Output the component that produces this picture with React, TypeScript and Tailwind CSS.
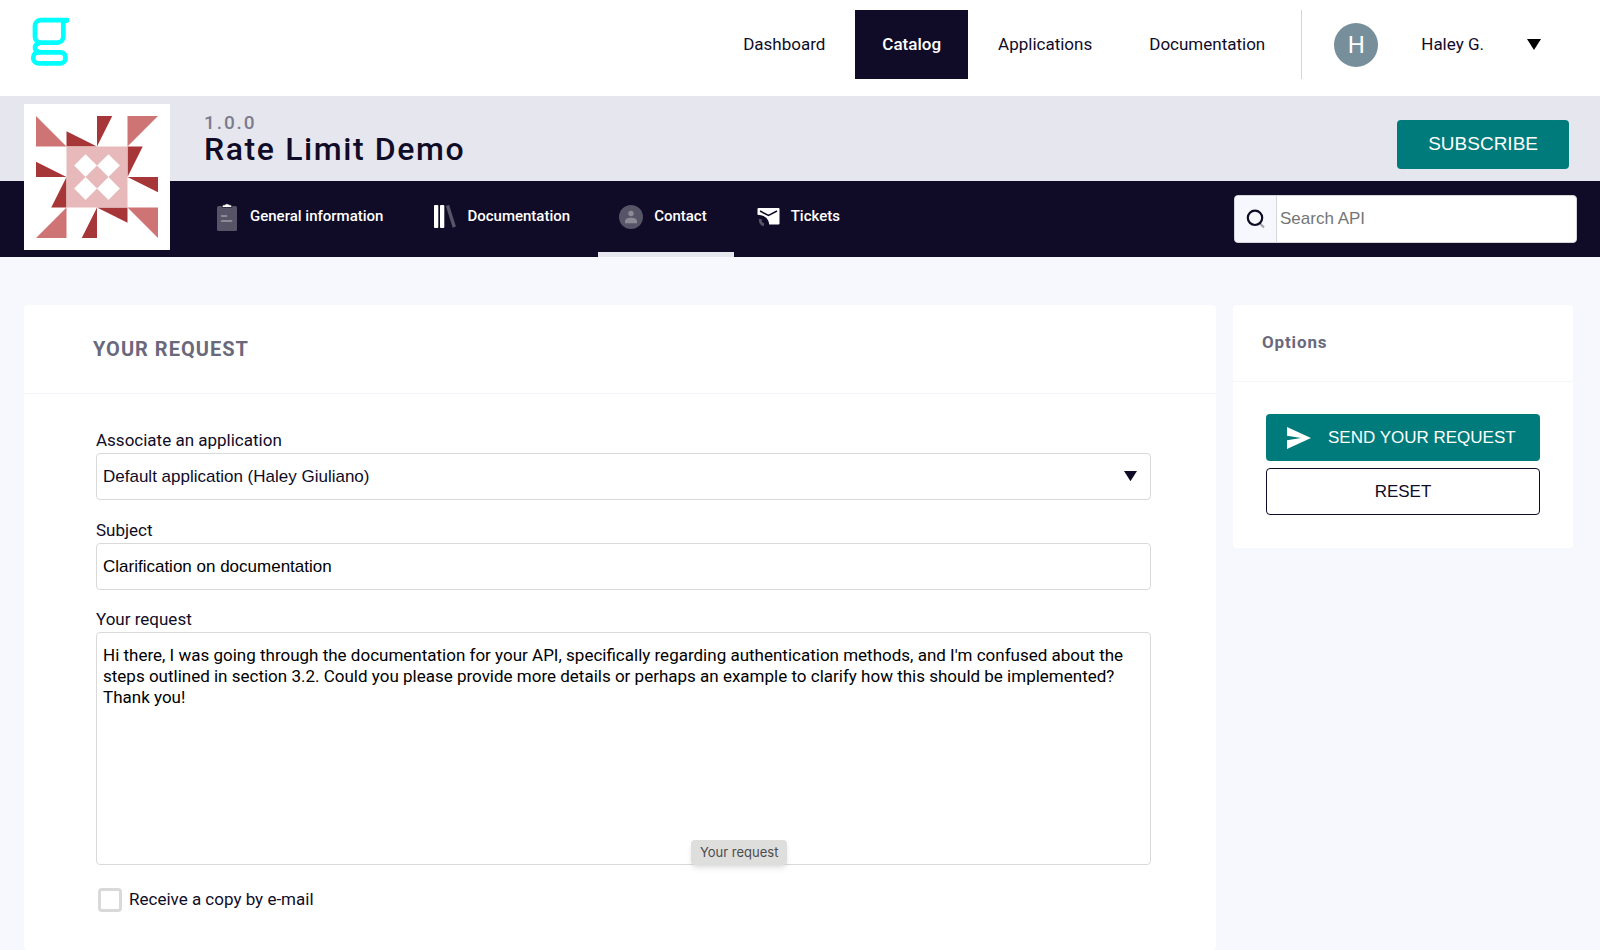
import { useState } from 'react';
import type { ReactNode } from 'react';

const navLinks = ['Dashboard', 'Catalog', 'Applications', 'Documentation'];

const message =
  "Hi there, I was going through the documentation for your API, specifically regarding authentication methods, and I'm confused about the steps outlined in section 3.2. Could you please provide more details or perhaps an example to clarify how this should be implemented? Thank you!";

function Logo() {
  return (
    <svg width="40" height="50" viewBox="0 0 40 50" fill="none" stroke="#00ffff" strokeWidth="4.7">
      <path d="M38 3.2H10.8a5.8 5.8 0 0 0-5.8 5.8v10.8a5.8 5.8 0 0 0 5.8 5.8H27.5a5.8 5.8 0 0 0 5.8-5.8V3.2" />
      <path d="M34 .9H39V4.5L37.5 6H34z" fill="#00ffff" stroke="none" />
      <path d="M9.5 26C3.6 27.5 3.6 33.3 9 35" />
      <path d="M8.3 35.3H30.5a5 5 0 0 1 5 5v1a5 5 0 0 1-5 5H8.3a5 5 0 0 1-5-5v-1a5 5 0 0 1 5-5z" />
    </svg>
  );
}

function ApiPicture() {
  return (
    <svg viewBox="0 0 80 80" className="w-full">
      <path fill="#cf7475" d="M0 0V20H20zM60 0H80L60 20zM60 60H80V80zM20 60V80H0z" />
      <path
        fill="#a73639"
        d="M20 10V20H40zM40 0H50L40 20zM60 20H70L60 40zM60 40H80V50zM60 60H40L60 70zM40 60V80H30zM0 30V40H20zM20 40V60H10z"
      />
      <path fill="#e7b9ba" d="M20 20H60V60H20z" />
      <path
        fill="#fff"
        d="M32.5 25L40 32.5L32.5 40L25 32.5zM47.5 25L55 32.5L47.5 40L40 32.5zM32.5 40L40 47.5L32.5 55L25 47.5zM47.5 40L55 47.5L47.5 55L40 47.5z"
      />
    </svg>
  );
}

function InfoIcon() {
  return (
    <svg width="24" height="28" viewBox="0 0 24 28">
      <rect x="2" y="3" width="20" height="25" rx="1.5" fill="#585467" />
      <path
        d="M7.2 4.5V3Q7.2 1.8 9 1.8H9.8Q10.2.7 12 .7T14.2 1.8H15Q16.8 1.8 16.8 3V4.5z"
        fill="#fff"
        stroke="#100c27"
        strokeWidth=".8"
      />
      <path d="M6.7 13H11.5M6.7 18H16.5" stroke="#8d8a98" strokeWidth="1.8" strokeLinecap="round" />
    </svg>
  );
}

function BooksIcon() {
  return (
    <svg width="24" height="24" viewBox="0 0 24 24">
      <rect x="2" y="0" width="4.3" height="23" rx="1" fill="#fff" />
      <rect x="8" y="0" width="4.3" height="23" rx="1" fill="#fff" />
      <path d="M16 2L21.8 20.5" stroke="#585467" strokeWidth="3.4" strokeLinecap="square" />
    </svg>
  );
}

function ContactIcon() {
  return (
    <svg width="24" height="24" viewBox="0 0 24 24">
      <circle cx="12" cy="12" r="12" fill="#585467" />
      <circle cx="12" cy="8.5" r="2.7" fill="#8d8a98" />
      <path d="M6 18.2V16.5C6 13.8 9 12.8 12 12.8S18 13.8 18 16.5V18.2z" fill="#8d8a98" />
    </svg>
  );
}

function TicketsIcon() {
  return (
    <svg width="24" height="24" viewBox="0 0 24 24">
      <path
        d="M2.5 3H22.5a1 1 0 0 1 1 1V18.5a1 1 0 0 1-1 1H13.2C13 14 9 10 1.5 9.8V4a1 1 0 0 1 1-1z"
        fill="#fff"
      />
      <path d="M4 6L12.5 10.5L21 6" fill="none" stroke="#100c27" strokeWidth="1.5" />
      <path d="M4.2 14C4.2 17.5 5.2 19.3 8 19.8" fill="none" stroke="#585467" strokeWidth="2.8" />
    </svg>
  );
}

function SearchIcon() {
  return (
    <svg width="20" height="20" viewBox="0 0 20 20" fill="none">
      <path d="M13.5 14L18 18.5" stroke="#a5a3b2" strokeWidth="2.2" />
      <circle cx="9" cy="8.8" r="7.2" stroke="#100c27" strokeWidth="2.2" />
    </svg>
  );
}

function SendIcon() {
  return (
    <svg width="24" height="22" viewBox="0 0 24 22" fill="#fff">
      <path d="M0 0L24 11L0 22V13.3L14 11L0 8.7z" />
    </svg>
  );
}

function Caret({ className = '' }: { className?: string }) {
  return (
    <svg viewBox="0 0 14 11" className={className} fill="currentColor">
      <path d="M0 0H14L7 11z" />
    </svg>
  );
}

const tabs: { label: string; icon: ReactNode }[] = [
  { label: 'General information', icon: <InfoIcon /> },
  { label: 'Documentation', icon: <BooksIcon /> },
  { label: 'Contact', icon: <ContactIcon /> },
  { label: 'Tickets', icon: <TicketsIcon /> },
];

function Header() {
  return (
    <header className="flex h-24 items-start justify-between bg-white pl-[30px] pr-[59px]">
      <a href="#" aria-label="Home" className="pt-[17px]">
        <Logo />
      </a>
      <div className="flex items-center pt-2.5">
        <nav className="flex gap-[3px]">
          {navLinks.map((link) => (
            <a
              key={link}
              href="#"
              className={`flex h-[69px] items-center px-[27px] text-[17px] ${
                link === 'Catalog' ? 'bg-[#100c27] font-medium text-white' : ''
              }`}
            >
              {link}
            </a>
          ))}
        </nav>
        <div className="ml-[9px] h-[69px] border-l border-[#d3d3d8]" />
        <button className="ml-8 flex items-center">
          <span className="flex size-11 items-center justify-center rounded-full bg-[#778f9b] text-[24px] text-white">H</span>
          <span className="ml-[43px] text-[17px]">Haley G.</span>
          <Caret className="ml-[43px] w-3.5 text-black" />
        </button>
      </div>
    </header>
  );
}

function ApiHeader() {
  return (
    <div className="relative">
      <div className="flex h-[85px] items-center justify-between bg-[#e6e6ef] pl-[204px] pr-[31px]">
        <div>
          <div className="text-[19px] leading-5 font-medium tracking-widest text-[#7d7c8d]">1.0.0</div>
          <h1 className="text-[32px] leading-8 font-medium tracking-wider">Rate Limit Demo</h1>
        </div>
        <button className="mt-3 h-[49px] rounded-sm bg-[#007b7b] px-[31px] font-['Liberation_Sans',sans-serif] text-[19px] text-white">
          SUBSCRIBE
        </button>
      </div>
      <div className="flex h-[76px] items-center justify-between bg-[#100c27] pl-[194px] pr-[23px]">
        <nav className="flex h-full gap-px">
          {tabs.map((tab) => (
            <a
              key={tab.label}
              href="#"
              className={`flex items-center gap-[11px] border-b-[5px] pl-[21px] pr-[27px] text-[15px] font-medium text-white ${
                tab.label === 'Contact' ? 'border-[#e6e6ef]' : 'border-transparent'
              }`}
            >
              {tab.icon}
              {tab.label}
            </a>
          ))}
        </nav>
        <label className="flex h-12 w-[343px] overflow-hidden rounded border border-[#d5d5da] bg-white">
          <span className="flex w-[42px] items-center justify-center border-r border-[#d5d5da] bg-[#f7f8fd]">
            <SearchIcon />
          </span>
          <input
            type="search"
            aria-label="Search API"
            placeholder="Search API"
            className="min-w-0 flex-1 px-[3px] font-['Liberation_Sans',sans-serif] text-[17px] outline-none placeholder:text-[#757575]"
          />
        </label>
      </div>
      <div className="absolute left-6 top-2 size-[146px] bg-white p-3">
        <ApiPicture />
      </div>
    </div>
  );
}

function RequestForm() {
  const [subject, setSubject] = useState('Clarification on documentation');
  const [request, setRequest] = useState(message);
  const [copy, setCopy] = useState(false);

  return (
    <section className="flex-1 rounded bg-white">
      <h2 className="flex h-[89px] items-center border-b border-[#f4f5fb] pl-[69px] text-[20px] font-bold tracking-wider text-[#6a697c]">
        YOUR REQUEST
      </h2>
      <form className="pl-[72px] pr-[65px] pt-9 text-[17px]">
        <label htmlFor="application" className="block pb-0.5 leading-[21px]">
          Associate an application
        </label>
        <div className="relative mb-5">
          <select
            id="application"
            className="h-[47px] w-full appearance-none rounded border border-[#d9d9d9] bg-white px-1.5 font-['Liberation_Sans',sans-serif]"
          >
            <option>Default application (Haley Giuliano)</option>
          </select>
          <Caret className="pointer-events-none absolute right-3.5 top-[18px] w-[13px]" />
        </div>

        <label htmlFor="subject" className="block pb-0.5 leading-[21px]">
          Subject
        </label>
        <input
          id="subject"
          type="text"
          value={subject}
          onChange={(e) => setSubject(e.target.value)}
          className="mb-[19px] block h-[47px] w-full rounded border border-[#d9d9d9] px-1.5 font-['Liberation_Sans',sans-serif] text-black"
        />

        <label htmlFor="request" className="block pb-0.5 leading-[21px]">
          Your request
        </label>
        <div className="relative">
          <textarea
            id="request"
            value={request}
            onChange={(e) => setRequest(e.target.value)}
            className="block h-[233px] w-full resize-none rounded border border-[#d9d9d9] px-1.5 py-3 leading-[21px] text-black"
          />
          <div
            role="tooltip"
            className="absolute bottom-0 left-[595px] rounded-sm bg-[#dededd] px-[9px] font-['Inter',sans-serif] text-[13px] leading-[25px] text-[#4c4c4c] shadow-md"
          >
            Your request
          </div>
        </div>

        <label className="mt-[22px] ml-0.5 flex items-center gap-[7px]">
          <input
            type="checkbox"
            checked={copy}
            onChange={(e) => setCopy(e.target.checked)}
            className="size-6 appearance-none rounded border-3 border-[#d9d9d9] checked:bg-[#007b7b]"
          />
          Receive a copy by e-mail
        </label>
      </form>
    </section>
  );
}

function Options() {
  return (
    <aside className="w-[340px] self-start rounded bg-white">
      <h2 className="flex h-[77px] items-center border-b border-[#f4f5fb] pl-[29px] text-[17px] font-bold tracking-wider text-[#6a697c]">
        Options
      </h2>
      <div className="flex flex-col gap-[7px] px-[33px] pt-8 pb-[33px] font-['Liberation_Sans',sans-serif] text-[17px]">
        <button className="flex h-[47px] items-center gap-[17px] rounded-sm bg-[#007b7b] pl-[21px] text-white">
          <SendIcon />
          SEND YOUR REQUEST
        </button>
        <button className="h-[47px] rounded-sm border border-[#100c27]">RESET</button>
      </div>
    </aside>
  );
}

export default function App() {
  return (
    <div className="flex min-h-screen flex-col bg-[#f7f8fd] font-['Roboto',sans-serif] text-[#100c27]">
      <Header />
      <ApiHeader />
      <main className="flex flex-1 gap-[17px] pt-12 pl-6 pr-[27px]">
        <RequestForm />
        <Options />
      </main>
    </div>
  );
}
